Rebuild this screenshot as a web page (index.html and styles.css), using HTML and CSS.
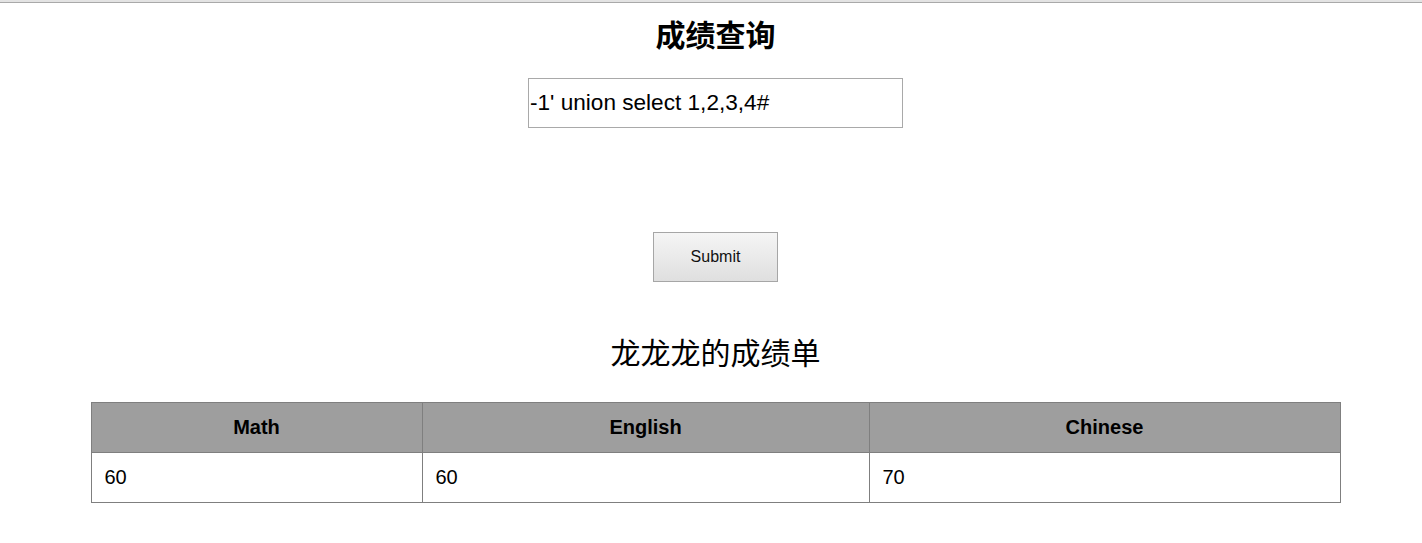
FILE: index.html
```html
<!DOCTYPE html>
<html lang="zh">
<head>
<meta charset="utf-8">
<title>成绩查询</title>
<link rel="stylesheet" href="styles.css">
</head>
<body>
<div class="topbar"></div>
<div class="page">
  <h1 class="title">成绩查询</h1>
  <form class="query">
    <input class="field" type="text" value="-1' union select 1,2,3,4#">
    <button class="submit" type="button">Submit</button>
  </form>
  <h2 class="subtitle">龙龙龙的成绩单</h2>
  <table class="scores">
    <thead>
      <tr><th class="c1">Math</th><th class="c2">English</th><th class="c3">Chinese</th></tr>
    </thead>
    <tbody>
      <tr><td>60</td><td>60</td><td>70</td></tr>
    </tbody>
  </table>
</div>
</body>
</html>
```

FILE: styles.css
```css
html, body {
  margin: 0;
  padding: 0;
  background: #fff;
}
body {
  font-family: "Liberation Sans", Arial, "Noto Sans CJK SC", sans-serif;
  color: #000;
}
.topbar {
  height: 2px;
  background: #e3e3e3;
  border-bottom: 1px solid #a9a9a9;
}
.page {
  padding-left: 9px;
  display: flex;
  flex-direction: column;
  align-items: center;
}
.title {
  margin: 10px 0 0;
  font-family: "Noto Sans CJK SC", sans-serif;
  font-size: 30px;
  line-height: 40px;
  font-weight: 700;
}
.query {
  margin: 25px 0 0;
  display: flex;
  flex-direction: column;
  align-items: center;
}
.field {
  box-sizing: border-box;
  width: 375px;
  height: 50px;
  margin: 0;
  border: 1px solid #a9a9a9;
  padding: 1px 1px;
  font-family: "Liberation Sans", Arial, sans-serif;
  font-size: 22.6px;
  color: #000;
  background: #fff;
  outline: none;
}
.submit {
  box-sizing: border-box;
  width: 125px;
  height: 50px;
  margin-top: 104px;
  border: 1px solid #a6a6a6;
  background: linear-gradient(#f5f5f5, #dfdfdf);
  font-family: "Liberation Sans", Arial, sans-serif;
  font-size: 16px;
  color: #111;
  padding: 0;
}
.subtitle {
  margin: 49px 0 0;
  font-family: "Noto Sans CJK SC", sans-serif;
  font-size: 30px;
  line-height: 40px;
  font-weight: 400;
}
.scores {
  margin: 31px 1px 0 1px;
  width: 1249px;
  border-collapse: collapse;
  table-layout: fixed;
  font-size: 20px;
}
.scores th, .scores td {
  border: 1px solid #7f7f7f;
  height: 50px;
  padding: 0 13px;
  box-sizing: border-box;
}
.scores th {
  background: #9e9e9e;
  font-weight: 700;
  text-align: center;
}
.scores td {
  text-align: left;
}
.c1 { width: 331px; }
.c2 { width: 447px; }
.c3 { width: 471px; }
```
